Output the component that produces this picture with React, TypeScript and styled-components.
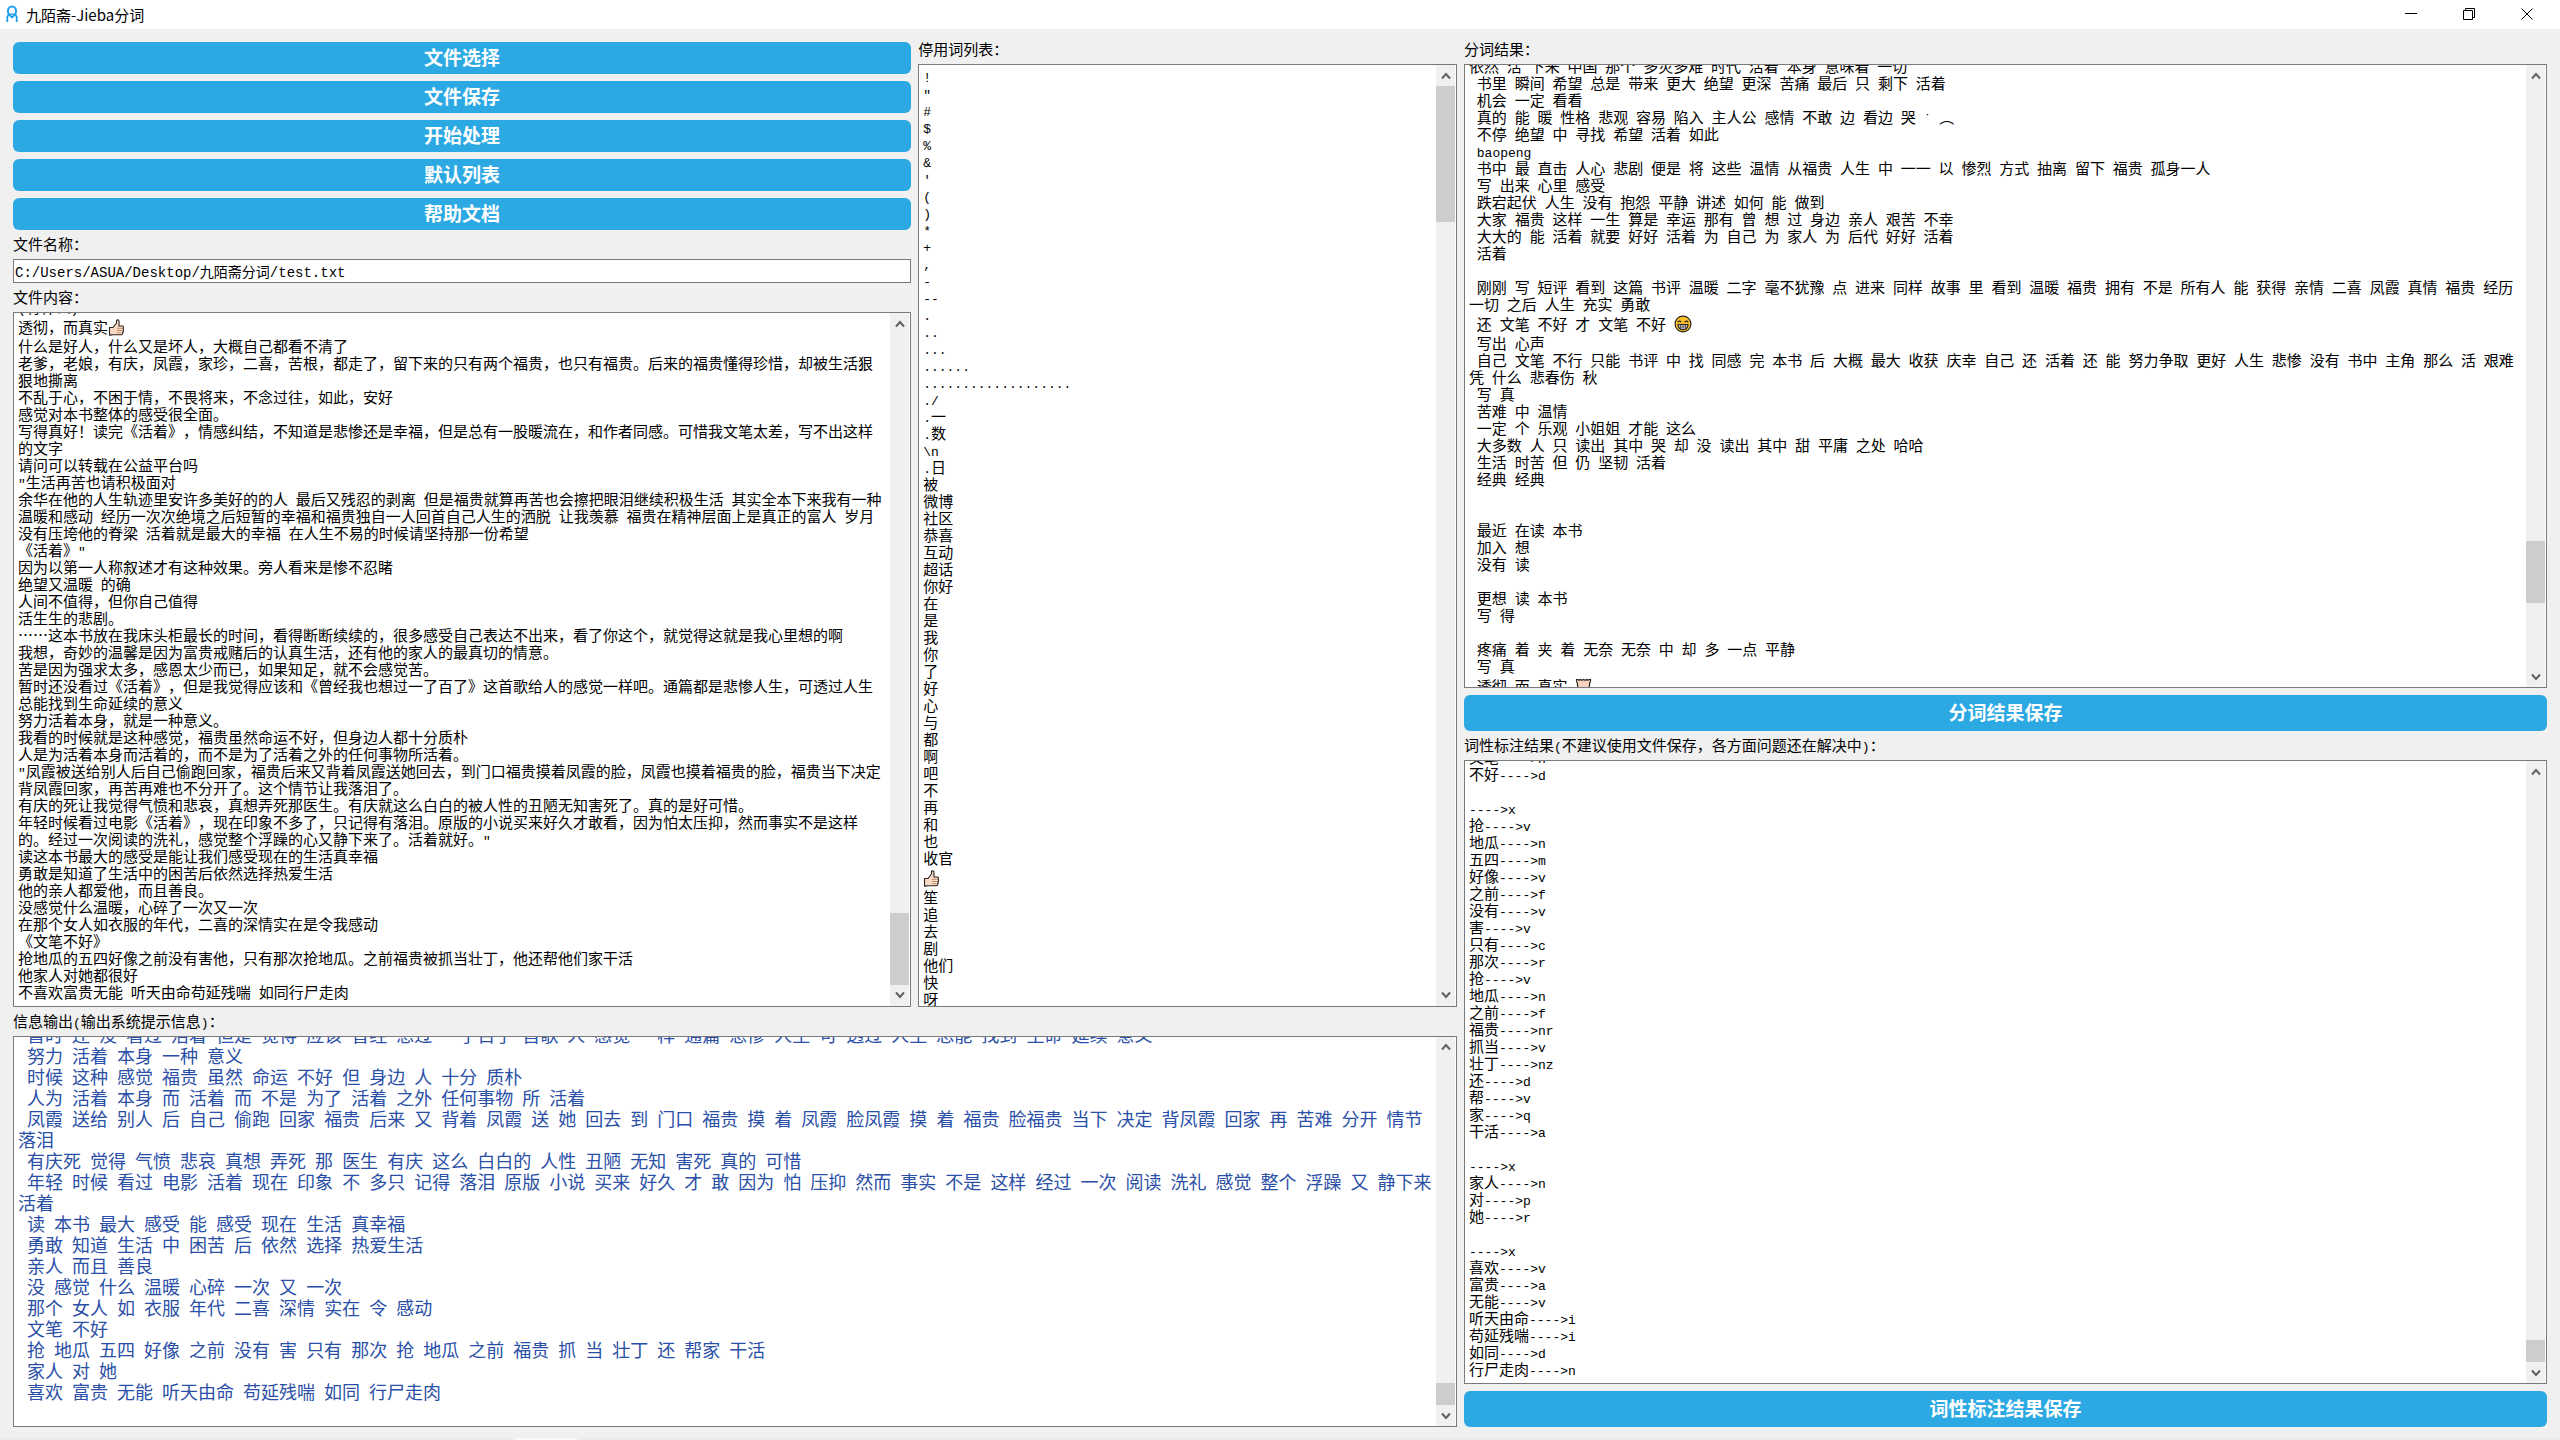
import React from "react";
import styled, { createGlobalStyle, css } from "styled-components";

const CJK = `"Noto Sans CJK SC", "Liberation Sans", sans-serif`;
const MONO = `"Liberation Mono", "Noto Sans CJK SC", monospace`;

const GlobalStyle = createGlobalStyle`
  *, *::before, *::after { box-sizing: border-box; }
  body { margin: 0; background: #f0f0f0; font-family: ${CJK}; color: #000; text-spacing-trim: space-all; }
`;

/* ---------- window frame ---------- */

const Window = styled.div`
  display: flex;
  flex-direction: column;
  height: 100vh;
  background: #f0f0f0;
`;

const TitleBar = styled.header`
  display: flex;
  align-items: flex-start;
  flex: none;
  height: 29px;
  padding: 0 4px 0 5px;
  background: #fff;
`;

const Title = styled.h1`
  display: flex;
  align-items: center;
  gap: 7px;
  flex: 1;
  margin: 0;
  height: 28px;
  font-size: 15px;
  font-weight: 400;
`;

const CaptionButton = styled.button`
  display: grid;
  place-items: center;
  width: 58px;
  height: 28px;
  padding: 0;
  border: 0;
  background: transparent;
`;

const Content = styled.main`
  flex: 1;
  min-height: 0;
  display: flex;
  gap: 7px;
  padding: 13px 13px 11px;
`;

const EdgeStrip = styled.footer`
  flex: none;
  height: 2px;
  padding-left: 515px;
  background: #ebebeb;
  &::before {
    content: "";
    display: block;
    width: 62px;
    height: 2px;
    background: #fafafa;
  }
`;

/* ---------- layout ---------- */

const Stack = styled.div<{ $grow?: number }>`
  display: flex;
  flex-direction: column;
  gap: 7px;
  flex: ${(p) => p.$grow ?? 1} 1 0;
  min-width: 0;
  min-height: 0;
`;

const Row = styled.div<{ $grow: number }>`
  display: flex;
  gap: 7px;
  flex: ${(p) => p.$grow} 1 0;
  min-height: 0;
`;

const captionText = css`
  flex: none;
  display: block;
  height: 15px;
  font-size: 15px;
  line-height: 13px;
  white-space: pre;
`;

const Caption = styled.span`
  ${captionText}
`;

const FieldLabel = styled.label`
  ${captionText}
`;

const Action = styled.button<{ $tall?: boolean }>`
  flex: none;
  height: ${(p) => (p.$tall ? 36 : 32)}px;
  padding: 0 0 2px;
  border: 0;
  border-radius: 6px;
  background: #2ca9e3;
  color: #fff;
  font-family: ${CJK};
  font-size: 19px;
  font-weight: 700;
  line-height: 24px;
`;

const PathInput = styled.input`
  flex: none;
  width: 100%;
  height: 24px;
  padding: 0 1px;
  border: 1px solid #7a7a7a;
  border-radius: 0;
  background: #fff;
  color: #000;
  font-family: ${MONO};
  font-size: 14px;
  outline: none;
`;

/* ---------- text panes ---------- */

const Frame = styled.div`
  display: flex;
  flex: 1 1 0;
  min-height: 0;
  padding-right: 1px;
  border: 1px solid #7a7a7a;
  background: #fff;
`;

const Viewport = styled.div`
  flex: 1;
  min-width: 0;
  overflow: hidden;
`;

const Doc = styled.div<{ $large?: boolean; $top: number }>`
  margin-top: ${(p) => p.$top}px;
  padding-left: 4px;
  outline: none;
  white-space: pre;
  font-size: ${(p) => (p.$large ? 18 : 15)}px;
  line-height: ${(p) => (p.$large ? 21 : 17)}px;
  color: ${(p) => (p.$large ? "#2a4fa6" : "#000")};
`;

const Line = styled.div<{ $emoji: boolean; $large?: boolean }>`
  min-height: ${(p) => (p.$large ? 21 : 17)}px;
  ${(p) => p.$emoji && "height: 22px; line-height: 24px;"}
`;

const Latin = styled.span<{ $large?: boolean }>`
  font-family: ${MONO};
  font-size: ${(p) => (p.$large ? 15 : 13)}px;
  line-height: 0;
`;

const Emoji = styled.svg`
  display: inline-block;
  vertical-align: -3px;
`;

const Scrollbar = styled.div`
  display: flex;
  flex-direction: column;
  flex: none;
  width: 19px;
  background: #f0f0f0;
`;

const Arrow = styled.button`
  display: grid;
  place-items: center;
  flex: none;
  height: 21px;
  padding: 0;
  border: 0;
  background: transparent;
`;

const Segment = styled.div<{ $grow: number; $thumb?: boolean }>`
  flex: ${(p) => p.$grow} 1 0;
  background: ${(p) => (p.$thumb ? "#cdcdcd" : "transparent")};
`;

const Thumb = () => (
  <Emoji width="17" height="17" viewBox="0 0 17 17" aria-label="👍🏻">
    <path d="M1.5 8.5H5L8.5 4V1.5C8.5 .6 11 .6 11 2.2V7h3.2c1.5 0 1.6 2 .6 2.2 1.2.4 1 2.1 0 2.3.9.5.7 2-.3 2.2.5.8 0 2-1.1 2H4.5c-.8 0-1.3.5-3 .5z" fill="#f9d8c4" stroke="#2b2420" strokeWidth="1.1" strokeLinejoin="round" />
    <path d="M9 9.3h4.8M9 11.5h4.8M9.2 13.7h4" stroke="#c58f68" strokeWidth="1" />
  </Emoji>
);

const Grin = () => (
  <Emoji width="18" height="18" viewBox="0 0 18 18" aria-label="😁">
    <circle cx="9" cy="9" r="7.9" fill="#fcc22e" stroke="#2b2420" strokeWidth="1.2" />
    <path d="M3.8 7.2c.8-1.5 2.6-1.5 3.4 0M10.8 7.2c.8-1.5 2.6-1.5 3.4 0" fill="none" stroke="#2b2420" strokeWidth="1.2" />
    <path d="M4 9.6h10c0 3-2.2 5-5 5s-5-2-5-5z" fill="#fff" stroke="#2b2420" strokeWidth="1.2" />
    <path d="M4.5 12h9M6.6 10v4M9 10v4.4M11.4 10v4" stroke="#2b2420" strokeWidth=".7" />
  </Emoji>
);

const Skin = () => (
  <Emoji width="17" height="17" viewBox="0 0 17 17" aria-label="🏻">
    <path d="M1.5 3V1.5H3l1 .8 1.4-.8 1.4.8 1.7-.8 1.7.8 1.4-.8 1.4.8 1-.8h1.5V3c-1.6 2.6-1.6 8.4 0 11v1.5h-14V14c1.6-2.6 1.6-8.4 0-11z" fill="#f7d3bf" stroke="#2b2420" strokeWidth="1.2" />
  </Emoji>
);

const GLYPHS: Record<string, React.FC> = { "{thumb}": Thumb, "{grin}": Grin, "{skin}": Skin };

/* Latin characters and blanks take half the cell of a Chinese one. */
function typeset(text: string, large?: boolean) {
  return text.split(/(\{\w+\}|[\x20-\x7e˙]+?(?=\{|[^\x20-\x7e˙]|$))/).map((part, i) => {
    const Glyph = GLYPHS[part];
    if (Glyph) return <Glyph key={i} />;
    if (/^[\x20-\x7e˙]+$/.test(part)) return <Latin key={i} $large={large}>{part}</Latin>;
    return part;
  });
}

type PaneProps = {
  id: string;
  label: string;
  text: string;
  top: number;
  bar: [number, number, number];
  large?: boolean;
};

function Pane({ id, label, text, top, bar, large }: PaneProps) {
  return (
    <>
      <Caption id={id}>{typeset(label)}</Caption>
      <Frame>
        <Viewport>
          <Doc
            role="textbox"
            aria-multiline="true"
            aria-labelledby={id}
            contentEditable
            suppressContentEditableWarning
            spellCheck={false}
            $large={large}
            $top={top}
          >
            {text.split("\n").map((line, i) => (
              <Line key={i} $large={large} $emoji={/\{\w+\}/.test(line)}>
                {typeset(line, large)}
              </Line>
            ))}
          </Doc>
        </Viewport>
        <Scrollbar>
          <Arrow aria-label="向上滚动">
            <svg width="10" height="8" viewBox="0 0 10 8">
              <path d="M1 6.5 5 2l4 4.5" fill="none" stroke="#606060" strokeWidth="2" />
            </svg>
          </Arrow>
          <Segment $grow={bar[0]} />
          <Segment $grow={bar[1]} $thumb />
          <Segment $grow={bar[2]} />
          <Arrow aria-label="向下滚动">
            <svg width="10" height="8" viewBox="0 0 10 8">
              <path d="M1 1.5 5 6l4-4.5" fill="none" stroke="#606060" strokeWidth="2" />
            </svg>
          </Arrow>
        </Scrollbar>
      </Frame>
    </>
  );
}

/* ---------- data ---------- */

const ACTIONS = ["文件选择", "文件保存", "开始处理", "默认列表", "帮助文档"];

const FILE_TEXT = `(有什么)
透彻，而真实{thumb}
什么是好人，什么又是坏人，大概自己都看不清了
老爹，老娘，有庆，凤霞，家珍，二喜，苦根，都走了，留下来的只有两个福贵，也只有福贵。后来的福贵懂得珍惜，却被生活狠
狠地撕离
不乱于心，不困于情，不畏将来，不念过往，如此，安好
感觉对本书整体的感受很全面。
写得真好！读完《活着》，情感纠结，不知道是悲惨还是幸福，但是总有一股暖流在，和作者同感。可惜我文笔太差，写不出这样
的文字
请问可以转载在公益平台吗
"生活再苦也请积极面对
余华在他的人生轨迹里安许多美好的的人 最后又残忍的剥离 但是福贵就算再苦也会擦把眼泪继续积极生活 其实全本下来我有一种
温暖和感动 经历一次次绝境之后短暂的幸福和福贵独自一人回首自己人生的洒脱 让我羡慕 福贵在精神层面上是真正的富人 岁月
没有压垮他的脊梁 活着就是最大的幸福 在人生不易的时候请坚持那一份希望
《活着》"
因为以第一人称叙述才有这种效果。旁人看来是惨不忍睹
绝望又温暖 的确
人间不值得，但你自己值得
活生生的悲剧。
……这本书放在我床头柜最长的时间，看得断断续续的，很多感受自己表达不出来，看了你这个，就觉得这就是我心里想的啊
我想，奇妙的温馨是因为富贵戒赌后的认真生活，还有他的家人的最真切的情意。
苦是因为强求太多，感恩太少而已，如果知足，就不会感觉苦。
暂时还没看过《活着》，但是我觉得应该和《曾经我也想过一了百了》这首歌给人的感觉一样吧。通篇都是悲惨人生，可透过人生
总能找到生命延续的意义
努力活着本身，就是一种意义。
我看的时候就是这种感觉，福贵虽然命运不好，但身边人都十分质朴
人是为活着本身而活着的，而不是为了活着之外的任何事物所活着。
"凤霞被送给别人后自己偷跑回家，福贵后来又背着凤霞送她回去，到门口福贵摸着凤霞的脸，凤霞也摸着福贵的脸，福贵当下决定
背凤霞回家，再苦再难也不分开了。这个情节让我落泪了。
有庆的死让我觉得气愤和悲哀，真想弄死那医生。有庆就这么白白的被人性的丑陋无知害死了。真的是好可惜。
年轻时候看过电影《活着》，现在印象不多了，只记得有落泪。原版的小说买来好久才敢看，因为怕太压抑，然而事实不是这样
的。经过一次阅读的洗礼，感觉整个浮躁的心又静下来了。活着就好。"
读这本书最大的感受是能让我们感受现在的生活真幸福
勇敢是知道了生活中的困苦后依然选择热爱生活
他的亲人都爱他，而且善良。
没感觉什么温暖，心碎了一次又一次
在那个女人如衣服的年代，二喜的深情实在是令我感动
《文笔不好》
抢地瓜的五四好像之前没有害他，只有那次抢地瓜。之前福贵被抓当壮丁，他还帮他们家干活
他家人对她都很好
不喜欢富贵无能 听天由命苟延残喘 如同行尸走肉`;

const STOP_WORDS = `!
"
#
$
%
&
'
(
)
*
+
,
-
--
.
..
...
......
...................
./
.一
.数
\\n
.日
被
微博
社区
恭喜
互动
超话
你好
在
是
我
你
了
好
心
与
都
啊
吧
不
再
和
也
收官
{thumb}
笙
追
去
剧
他们
快
呀`;

const LOG_TEXT = ` 暂时 还 没 看过 活着 但是 觉得 应该 曾经 想过 一了百了 首歌 人 感觉 一样 通篇 悲惨 人生 可 透过 人生 总能 找到 生命 延续 意义
 努力 活着 本身 一种 意义
 时候 这种 感觉 福贵 虽然 命运 不好 但 身边 人 十分 质朴
 人为 活着 本身 而 活着 而 不是 为了 活着 之外 任何事物 所 活着
 凤霞 送给 别人 后 自己 偷跑 回家 福贵 后来 又 背着 凤霞 送 她 回去 到 门口 福贵 摸 着 凤霞 脸凤霞 摸 着 福贵 脸福贵 当下 决定 背凤霞 回家 再 苦难 分开 情节
落泪
 有庆死 觉得 气愤 悲哀 真想 弄死 那 医生 有庆 这么 白白的 人性 丑陋 无知 害死 真的 可惜
 年轻 时候 看过 电影 活着 现在 印象 不 多只 记得 落泪 原版 小说 买来 好久 才 敢 因为 怕 压抑 然而 事实 不是 这样 经过 一次 阅读 洗礼 感觉 整个 浮躁 又 静下来
活着
 读 本书 最大 感受 能 感受 现在 生活 真幸福
 勇敢 知道 生活 中 困苦 后 依然 选择 热爱生活
 亲人 而且 善良
 没 感觉 什么 温暖 心碎 一次 又 一次
 那个 女人 如 衣服 年代 二喜 深情 实在 令 感动
 文笔 不好
 抢 地瓜 五四 好像 之前 没有 害 只有 那次 抢 地瓜 之前 福贵 抓 当 壮丁 还 帮家 干活
 家人 对 她
 喜欢 富贵 无能 听天由命 苟延残喘 如同 行尸走肉`;

const SEGMENTS = `依然 活 下来 中国 那个 多灾多难 时代 活着 本身 意味着 一切
 书里 瞬间 希望 总是 带来 更大 绝望 更深 苦痛 最后 只 剩下 活着
 机会 一定 看看
 真的 能 暖 性格 悲观 容易 陷入 主人公 感情 不敢 边 看边 哭 ˙ ︵
 不停 绝望 中 寻找 希望 活着 如此
 baopeng
 书中 最 直击 人心 悲剧 便是 将 这些 温情 从福贵 人生 中 一一 以 惨烈 方式 抽离 留下 福贵 孤身一人
 写 出来 心里 感受
 跌宕起伏 人生 没有 抱怨 平静 讲述 如何 能 做到
 大家 福贵 这样 一生 算是 幸运 那有 曾 想 过 身边 亲人 艰苦 不幸
 大大的 能 活着 就要 好好 活着 为 自己 为 家人 为 后代 好好 活着
 活着

 刚刚 写 短评 看到 这篇 书评 温暖 二字 毫不犹豫 点 进来 同样 故事 里 看到 温暖 福贵 拥有 不是 所有人 能 获得 亲情 二喜 凤霞 真情 福贵 经历
一切 之后 人生 充实 勇敢
 还 文笔 不好 才 文笔 不好 {grin}
 写出 心声
 自己 文笔 不行 只能 书评 中 找 同感 完 本书 后 大概 最大 收获 庆幸 自己 还 活着 还 能 努力争取 更好 人生 悲惨 没有 书中 主角 那么 活 艰难
凭 什么 悲春伤 秋
 写 真
 苦难 中 温情
 一定 个 乐观 小姐姐 才能 这么
 大多数 人 只 读出 其中 哭 却 没 读出 其中 甜 平庸 之处 哈哈
 生活 时苦 但 仍 坚韧 活着
 经典 经典


 最近 在读 本书
 加入 想
 没有 读

 更想 读 本书
 写 得

 疼痛 着 夹 着 无奈 无奈 中 却 多 一点 平静
 写 真
 透彻 而 真实 {skin}`;

const TAGS = `文笔---->n
不好---->d

---->x
抢---->v
地瓜---->n
五四---->m
好像---->v
之前---->f
没有---->v
害---->v
只有---->c
那次---->r
抢---->v
地瓜---->n
之前---->f
福贵---->nr
抓当---->v
壮丁---->nz
还---->d
帮---->v
家---->q
干活---->a

---->x
家人---->n
对---->p
她---->r

---->x
喜欢---->v
富贵---->a
无能---->v
听天由命---->i
苟延残喘---->i
如同---->d
行尸走肉---->n`;

export default function App() {
  return (
    <Window>
      <GlobalStyle />
      <TitleBar>
        <Title>
          <svg width="14" height="18" viewBox="0 0 14 18" fill="none" stroke="#1e9df0" aria-hidden="true">
            <path d="M3.500 9C2 4.500 3.600 1.500 7 1.500s5 3 3.500 7.500" strokeWidth="2" />
            <path d="M2.300 17v-5.500L4 9.500l3 3 3-3 1.700 2V17" strokeWidth="1.800" />
            <path d="M4 9.200h6" strokeWidth="1.400" />
          </svg>
          九陌斋-Jieba分词
        </Title>
        <CaptionButton aria-label="最小化">
          <svg width="12" height="12" viewBox="0 0 12 12"><path d="M0 5.500h12" stroke="#000" /></svg>
        </CaptionButton>
        <CaptionButton aria-label="还原">
          <svg width="12" height="12" viewBox="0 0 12 12" fill="none" stroke="#000">
            <path d="M.5 2.500h9v9h-9zM2.500 2.500v-2h9v9h-2" />
          </svg>
        </CaptionButton>
        <CaptionButton aria-label="关闭">
          <svg width="12" height="12" viewBox="0 0 12 12"><path d="M.5.5l11 11M11.500.5l-11 11" stroke="#000" /></svg>
        </CaptionButton>
      </TitleBar>

      <Content>
        <Stack $grow={4}>
          <Row $grow={7}>
            <Stack $grow={5}>
              {ACTIONS.map((name) => (
                <Action key={name}>{name}</Action>
              ))}
              <FieldLabel htmlFor="path">文件名称：</FieldLabel>
              <PathInput id="path" spellCheck={false} defaultValue="C:/Users/ASUA/Desktop/九陌斋分词/test.txt" />
              <Pane id="file" label="文件内容：" text={FILE_TEXT} top={-15} bar={[579, 72, 0]} />
            </Stack>
            <Stack $grow={3}>
              <Pane id="stop" label="停用词列表：" text={STOP_WORDS} top={2} bar={[0, 136, 763]} />
            </Stack>
          </Row>
          <Stack $grow={3}>
            <Pane id="log" label="信息输出(输出系统提示信息)：" text={LOG_TEXT} top={-13} bar={[325, 22, 0]} large />
          </Stack>
        </Stack>
        <Stack $grow={3}>
          <Pane id="segments" label="分词结果：" text={SEGMENTS} top={-8} bar={[455, 62, 63]} />
          <Action $tall>分词结果保存</Action>
          <Pane
            id="tags"
            label="词性标注结果(不建议使用文件保存，各方面问题还在解决中)："
            text={TAGS}
            top={-13}
            bar={[558, 22, 0]}
          />
          <Action $tall>词性标注结果保存</Action>
        </Stack>
      </Content>
      <EdgeStrip />
    </Window>
  );
}
